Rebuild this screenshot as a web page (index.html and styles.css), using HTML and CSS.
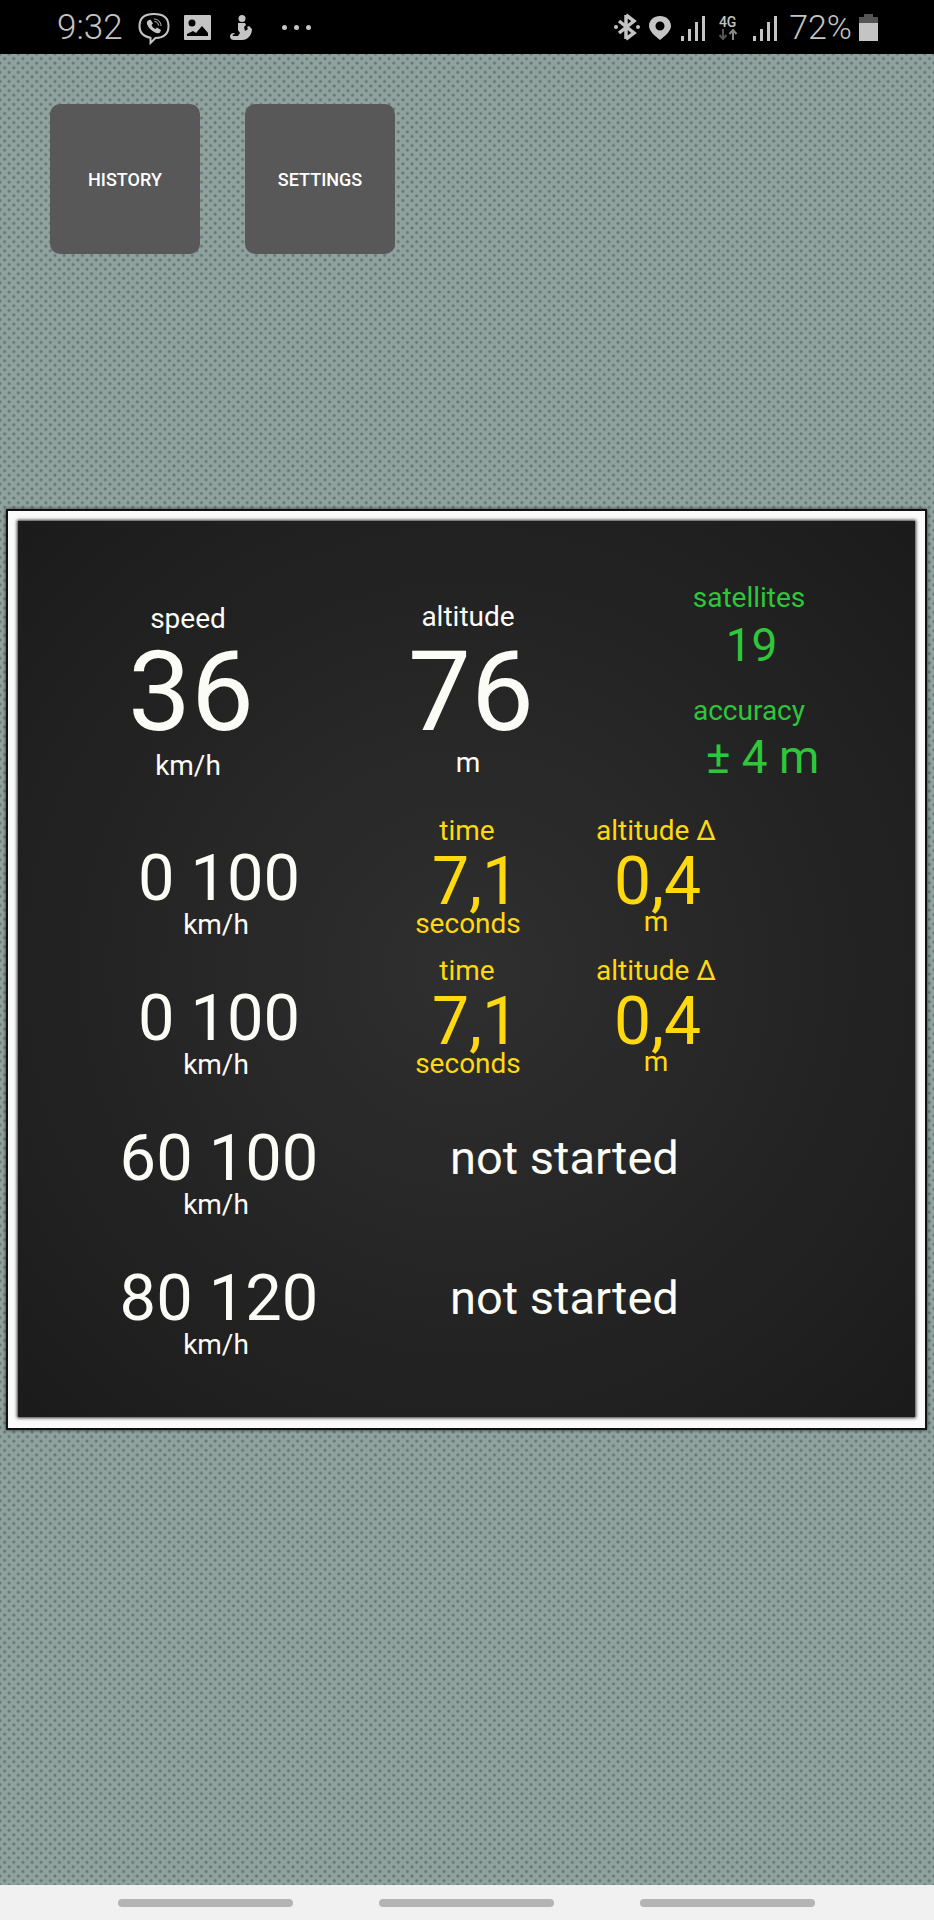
FILE: index.html

```html
<!DOCTYPE html>
<html lang="en">
<head>
  <meta charset="UTF-8" />
  <title>Speedometer</title>
  <link rel="stylesheet" href="styles.css">
</head>
<body>
  <div class="statusbar">
    <div class="status-left">
      <span class="clock">9:32</span>
      <svg class="ic-viber" width="32" height="33" viewBox="0 0 32 33"><path d="M16 2c9 0 14.500 3.500 14.500 12 0 8-5 11.800-13 12l-5 5v-5.200C5 24.500 1.500 21 1.500 14 1.500 5.500 7 2 16 2z" fill="none" stroke="#c4c4c4" stroke-width="2"/><path d="M10 8.500l2.500-1 2.500 4-1.500 1.500c.8 2 2 3.200 4 4l1.500-1.500 4 2.500-1 2.500c-1 1-3 1-5 0-4-2-7-5-8-8.500-.3-1.500 0-2.500 1-3.500z" fill="#c4c4c4"/><path d="M16 7c3.500 0 7 2.800 7 7M16.500 9.500c2.200 0 4 1.800 4 4" fill="none" stroke="#c4c4c4"/></svg>
      <svg class="ic-image" width="27" height="25" viewBox="0 0 27 25"><path fill-rule="evenodd" d="M1 0h25a1 1 0 0 1 1 1v23a1 1 0 0 1-1 1H1a1 1 0 0 1-1-1V1a1 1 0 0 1 1-1zM8 4.500a3.500 3.500 0 1 0 0 7 3.500 3.500 0 0 0 0-7zM3 21h21v-3l-6-7-6 7-3-2-6 3z" fill="#c4c4c4"/></svg>
      <svg class="ic-person" width="22" height="25" viewBox="0 0 22 25"><circle cx="12" cy="3.500" r="3.500" fill="#c4c4c4"/><path d="M8 8h7l1 2-2 2 1 4 3-2-1-2 2-1 3 3c0 6-4 11-10 11H4c-2 0-4-1-4-4 0-2 2-3 4-3l1 1c-2 0-3 1-2 2h5l2-3-2-3z" fill="#c4c4c4"/></svg>
      <span class="dots"><i></i><i></i><i></i></span>
    </div>
    <div class="status-right">
      <svg class="ic-bt" width="26" height="28" viewBox="0 0 26 28"><path d="M12 2l8 6-15 12M12 26l8-6L5 8M12 2v24" fill="none" stroke="#c4c4c4" stroke-width="3.500"/><circle cx="2" cy="14" r="2" fill="#c4c4c4"/><circle cx="24" cy="14" r="2" fill="#c4c4c4"/></svg>
      <svg class="ic-pin" width="22" height="24" viewBox="0 0 22 24"><path fill-rule="evenodd" d="M11 0c6 0 11 4 11 10 0 5-6 10-11 14C6 20 0 15 0 10 0 4 5 0 11 0zm0 5.500a4.500 4.500 0 1 0 0 9 4.500 4.500 0 0 0 0-9z" fill="#c4c4c4"/></svg>
      <svg class="ic-signal" width="24" height="25" viewBox="0 0 24 25"><path d="M0 20h3v5H0zM7 13h3v12H7zM14 6h3v19h-3zM21 0h3v25h-3z" fill="#c4c4c4"/></svg>
      <span class="net"><b>4G</b><svg width="20" height="11" viewBox="0 0 20 11"><path d="M5 0v9M1.500 6L5 10l3.500-4" fill="none" stroke="#555" stroke-width="2"/><path d="M15 11V2M11.500 5L15 1l3.500 4" fill="none" stroke="#888" stroke-width="2"/></svg></span>
      <svg class="ic-signal" width="24" height="25" viewBox="0 0 24 25"><path d="M0 20h3v5H0zM7 13h3v12H7zM14 6h3v19h-3zM21 0h3v25h-3z" fill="#c4c4c4"/></svg>
      <span class="pct">72%</span>
      <span class="battery"><i class="cap"></i><i class="empty"></i><i class="full"></i></span>
    </div>
  </div>

  <main class="screen">
    <div class="buttons">
      <button class="btn">HISTORY</button>
      <button class="btn">SETTINGS</button>
    </div>

    <section class="frame">
      <div class="panel">
        <div class="top-row">
          <div class="big-col speed-col">
            <div class="lbl">speed</div>
            <div class="big">36</div>
            <div class="lbl">km/h</div>
          </div>
          <div class="big-col alt-col">
            <div class="lbl">altitude</div>
            <div class="big">76</div>
            <div class="lbl">m</div>
          </div>
          <div class="gps-col">
            <div class="lbl">satellites</div>
            <div class="gps-val sat">19</div>
            <div class="lbl acc-lbl">accuracy</div>
            <div class="gps-val acc">± 4 m</div>
          </div>
        </div>

        <div class="run">
          <div class="range"><div class="range-val">0 100</div><div class="lbl">km/h</div></div>
          <div class="res time-res">
            <div class="lbl">time</div>
            <div class="res-val">7,1</div>
            <div class="lbl under">seconds</div>
          </div>
          <div class="res alt-res">
            <div class="lbl">altitude Δ</div>
            <div class="res-val">0,4</div>
            <div class="lbl under">m</div>
          </div>
        </div>

        <div class="run">
          <div class="range"><div class="range-val">0 100</div><div class="lbl">km/h</div></div>
          <div class="res time-res">
            <div class="lbl">time</div>
            <div class="res-val">7,1</div>
            <div class="lbl under">seconds</div>
          </div>
          <div class="res alt-res">
            <div class="lbl">altitude Δ</div>
            <div class="res-val">0,4</div>
            <div class="lbl under">m</div>
          </div>
        </div>

        <div class="run">
          <div class="range"><div class="range-val">60 100</div><div class="lbl">km/h</div></div>
          <div class="idle">not started</div>
        </div>

        <div class="run">
          <div class="range"><div class="range-val">80 120</div><div class="lbl">km/h</div></div>
          <div class="idle">not started</div>
        </div>
      </div>
    </section>
  </main>

  <div class="navbar">
    <span class="pill"></span><span class="pill"></span><span class="pill"></span>
  </div>
</body>
</html>
```

FILE: styles.css

```css
* { box-sizing: border-box; }
html, body { margin: 0; padding: 0; }
body { width: 934px; height: 1920px; display: flex; flex-direction: column; font-family: Roboto, sans-serif; overflow: hidden; }

.statusbar { height: 54px; background: #000; color: #c4c4c4; display: flex; justify-content: space-between; align-items: center; padding: 0 56px 0 57px; flex: none; }
.status-left, .status-right { display: flex; align-items: center; }
.clock { font-size: 35px; font-weight: 300; margin-right: 15px; }
.ic-viber { margin-right: 14px; margin-top: 2px; }
.ic-image { margin-right: 19px; }
.ic-person { margin-right: 30px; }
.dots { display: flex; gap: 7px; }
.dots i { width: 5px; height: 5px; border-radius: 50%; background: #c4c4c4; }
.ic-bt { margin-right: 9px; }
.ic-pin { margin-right: 10px; margin-top: 2px; }
.ic-signal { margin-top: 2px; }
.net { display: flex; flex-direction: column; align-items: center; width: 21px; margin: 0 15px 0 12px; }
.net b { font-size: 14px; line-height: 14px; font-weight: 500; }
.pct { font-size: 34px; font-weight: 300; margin: 0 7px 0 12px; }
.battery { width: 19px; height: 27px; display: flex; flex-direction: column; align-items: center; }
.battery .cap { width: 9px; height: 3px; background: #555; }
.battery .empty { width: 19px; height: 6px; background: #555; }
.battery .full { width: 19px; height: 18px; background: #c4c4c4; }

.screen {
  flex: 1;
  background-color: #90a29e;
  background-image:
    radial-gradient(circle at 50% 50%, #5f6f6b 0, #6a7a76 1.1px, transparent 2px),
    radial-gradient(circle at 50% 50%, #5f6f6b 0, #6a7a76 1.1px, transparent 2px);
  background-size: 9.17px 9.17px;
  background-position: 0 0, 4.58px 4.58px;
  padding: 50px 7px 0 6px;
}

.buttons { display: flex; gap: 45px; padding-left: 44px; height: 410px; align-items: flex-start; }
.btn { width: 150px; height: 150px; background: #585858; color: #fff; border: none; border-radius: 10px; font-family: Roboto, sans-serif; font-size: 18px; font-weight: 500; padding: 0; }

.frame { height: 921px; border: 2px solid #111; background: #fafafa; padding: 10px 10px 11px; margin-top: -5px; box-shadow: 0 0 3px #222; }
.panel { height: 100%; background: radial-gradient(ellipse at center, #2f2f2f 0%, #1b1b1c 100%); color: #fcfcf6; display: flex; flex-direction: column; box-shadow: 0 0 3px 1px #333; padding-top: 78px; }

.lbl { font-size: 28px; line-height: 30px; text-align: center; }

.top-row { display: flex; height: 225px; }
.big-col { text-align: center; }
.speed-col { width: 240px; margin-left: 50px; margin-top: 5px; }
.alt-col { width: 240px; margin-left: 40px; margin-top: 3px; }
.big { font-size: 112px; line-height: 112px; margin: 2px 0 3px 6px; }
.alt-col .big { margin: 4px 0 0 6px; }
.gps-col { color: #2fc73a; width: 200px; margin-left: 61px; margin-top: -16px; }
.gps-val { text-align: center; }
.sat { font-size: 46px; line-height: 54px; margin-left: 5px; margin-top: 5px; }
.acc-lbl { margin-top: 24px; }
.acc { font-size: 46px; line-height: 54px; margin-left: 27px; margin-top: 4px; }

.run { display: flex; height: 140px; }
.range { width: 300px; margin-left: 51px; text-align: center; padding-top: 19px; }
.range-val { font-size: 65px; line-height: 70px; }
.range .lbl { line-height: 28px; margin-top: -2px; margin-left: -6px; }
.res { color: #ffd90f; text-align: center; }
.time-res { width: 200px; margin-top: -8px; margin-left: -2px; }
.alt-res { width: 200px; margin-left: -11px; margin-top: -8px; }
.res-val { font-size: 66px; line-height: 66px; margin: 3px 0 0 0; }
.time-res .res-val { margin-left: 17px; }
.alt-res .res-val { margin-left: 3px; }
.under { margin-top: -6px; }
.time-res .under { margin-left: 2px; }
.alt-res .under { margin-top: -8px; }
.idle { font-size: 47px; line-height: 72px; margin-left: 81px; margin-top: 18px; }

.navbar { height: 35px; background: #f1f1f1; display: flex; justify-content: space-between; align-items: center; padding: 0 119px 0 118px; flex: none; }
.pill { width: 175px; height: 8px; border-radius: 4px; background: #b4b4b4; }
```
